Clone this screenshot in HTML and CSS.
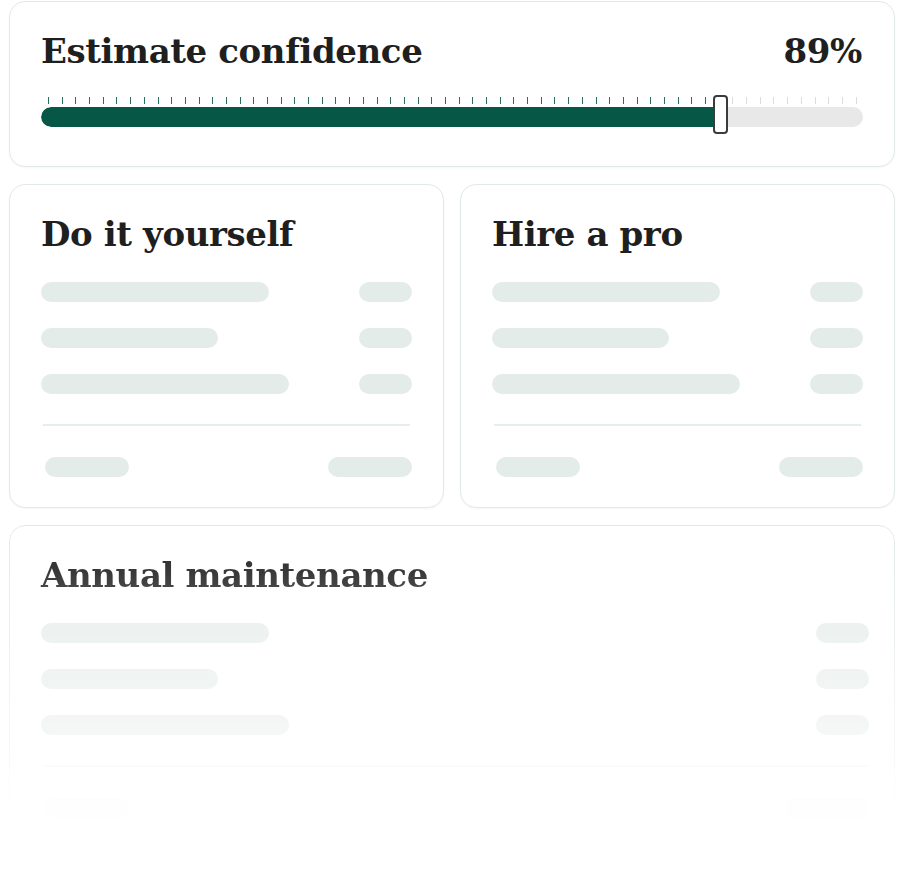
FILE: index.html
```html
<!DOCTYPE html>
<html lang="en">
<head>
<meta charset="utf-8">
<title>Estimate</title>
<link rel="stylesheet" href="styles.css">
</head>
<body>
<main class="page">
  <section class="card confidence">
    <div class="conf-head">
      <h2 class="title">Estimate confidence</h2>
      <span class="title pct">89%</span>
    </div>
    <div class="slider">
      <div class="ticks">
        <i class="on"></i><i class="on"></i><i class="on"></i><i class="on"></i><i class="on"></i><i class="on"></i><i class="on"></i><i class="on"></i><i class="on"></i><i class="on"></i>
        <i class="on"></i><i class="on"></i><i class="on"></i><i class="on"></i><i class="on"></i><i class="on"></i><i class="on"></i><i class="on"></i><i class="on"></i><i class="on"></i>
        <i class="on"></i><i class="on"></i><i class="on"></i><i class="on"></i><i class="on"></i><i class="on"></i><i class="on"></i><i class="on"></i><i class="on"></i><i class="on"></i>
        <i class="on"></i><i class="on"></i><i class="on"></i><i class="on"></i><i class="on"></i><i class="on"></i><i class="on"></i><i class="on"></i><i class="on"></i><i class="on"></i>
        <i class="on"></i><i class="on"></i><i class="on"></i><i class="on"></i><i class="on"></i><i class="on"></i><i class="on"></i><i class="on"></i><i class="on"></i><i></i>
        <i></i><i></i><i></i><i></i><i></i><i></i><i></i><i></i><i></i><i></i>
      </div>
      <div class="track"><div class="fill" style="width:679px"></div></div>
      <div class="thumb"></div>
    </div>
  </section>

  <div class="pair">
    <section class="card">
      <h2 class="title">Do it yourself</h2>
      <div class="rows">
        <div class="row"><span class="sk" style="width:228px"></span><span class="sk short"></span></div>
        <div class="row"><span class="sk" style="width:177px"></span><span class="sk short"></span></div>
        <div class="row"><span class="sk" style="width:248px"></span><span class="sk short"></span></div>
      </div>
      <div class="divider"></div>
      <div class="row total"><span class="sk mid"></span><span class="sk mid"></span></div>
    </section>
    <section class="card">
      <h2 class="title">Hire a pro</h2>
      <div class="rows">
        <div class="row"><span class="sk" style="width:228px"></span><span class="sk short"></span></div>
        <div class="row"><span class="sk" style="width:177px"></span><span class="sk short"></span></div>
        <div class="row"><span class="sk" style="width:248px"></span><span class="sk short"></span></div>
      </div>
      <div class="divider"></div>
      <div class="row total"><span class="sk mid"></span><span class="sk mid"></span></div>
    </section>
  </div>

  <section class="card annual">
    <h2 class="title">Annual maintenance</h2>
    <div class="rows">
      <div class="row"><span class="sk" style="width:228px"></span><span class="sk short"></span></div>
      <div class="row"><span class="sk" style="width:177px"></span><span class="sk short"></span></div>
      <div class="row"><span class="sk" style="width:248px"></span><span class="sk short"></span></div>
    </div>
    <div class="divider"></div>
    <div class="row total"><span class="sk mid"></span><span class="sk mid"></span></div>
  </section>
</main>
</body>
</html>
```

FILE: styles.css
```css
* { box-sizing: border-box; }

html, body {
  margin: 0;
  background: #ffffff;
}

body {
  font-family: "DejaVu Serif", "Liberation Serif", serif;
  color: #1f1f1f;
}

.page {
  width: 903px;
  padding: 1px 8px 0 9px;
  display: flex;
  flex-direction: column;
  gap: 17px;
}

.card {
  background: #ffffff;
  border: 1px solid #e2eae8;
  border-radius: 16px;
  padding: 29px 31px 30px 31px;
  box-shadow: 0 1px 2px rgba(20, 60, 50, 0.04);
}

.title {
  margin: 0;
  font-size: 34px;
  line-height: 40px;
  font-weight: 700;
  letter-spacing: -0.4px;
  color: #1f1f1f;
}

/* confidence card */
.confidence {
  padding-bottom: 39px;
}

.conf-head {
  display: flex;
  justify-content: space-between;
  align-items: baseline;
}

.pct {
  padding-right: 1px;
}

.slider {
  position: relative;
  margin-top: 26px;
}

.ticks {
  height: 7px;
  display: flex;
  justify-content: space-between;
  padding: 0 6px 0 7px;
}

.ticks i {
  display: block;
  width: 1px;
  height: 7px;
  background: #dcdcdc;
}

.ticks i.on {
  background: #2a6e5e;
}

.track {
  margin-top: 3px;
  height: 20px;
  border-radius: 10px;
  background: #e8e8e8;
  overflow: hidden;
}

.fill {
  height: 100%;
  background: #065746;
  border-radius: 10px 0 0 10px;
}

.thumb {
  position: absolute;
  left: 672px;
  top: -2px;
  width: 15px;
  height: 39px;
  background: #ffffff;
  border: 2px solid #3b3b3b;
  border-radius: 4px;
}

/* cost cards */
.pair {
  display: grid;
  grid-template-columns: 1fr 1fr;
  gap: 16px;
}

.rows {
  margin-top: 28px;
  display: flex;
  flex-direction: column;
  gap: 26px;
}

.row {
  display: flex;
  justify-content: space-between;
  align-items: center;
}

.sk {
  display: block;
  height: 20px;
  border-radius: 10px;
  background: #e4ecea;
}

.sk.short { width: 53px; }
.sk.mid { width: 84px; }

.divider {
  margin: 30px 2px 0 2px;
  height: 2px;
  background: #e6eeec;
}

.total {
  margin-top: 31px;
  padding-left: 4px;
}

/* fading annual card */
.annual {
  padding-right: 25px;
  -webkit-mask-image: linear-gradient(to bottom,
    rgba(0,0,0,1) 0%,
    rgba(0,0,0,0.88) 15%,
    rgba(0,0,0,0.67) 33%,
    rgba(0,0,0,0.44) 62%,
    rgba(0,0,0,0.22) 74%,
    rgba(0,0,0,0.06) 87%,
    rgba(0,0,0,0) 100%);
  mask-image: linear-gradient(to bottom,
    rgba(0,0,0,1) 0%,
    rgba(0,0,0,0.88) 15%,
    rgba(0,0,0,0.67) 33%,
    rgba(0,0,0,0.44) 62%,
    rgba(0,0,0,0.22) 74%,
    rgba(0,0,0,0.06) 87%,
    rgba(0,0,0,0) 100%);
}
```
